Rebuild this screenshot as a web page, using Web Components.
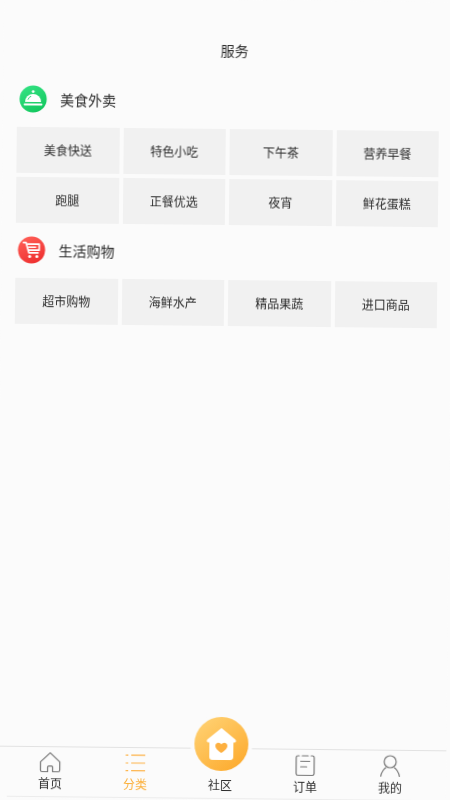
<!DOCTYPE html>
<html lang="zh">
<head>
<meta charset="utf-8">
<title>服务</title>
<style>
  html, body { margin: 0; padding: 0; height: 100%; background: #fbfbfb; overflow: hidden; }
  body { font-family: "Noto Sans CJK SC", "Noto Sans", sans-serif; color: #2b2b2b; }
  svg { display: block; }
</style>
</head>
<body>
<service-page>
  <service-section title="美食外卖">
    <svg slot="icon" width="28" height="28" viewBox="0 0 28 28">
      <defs><linearGradient id="g1" x1="0.2" y1="0" x2="0.7" y2="1"><stop offset="0" stop-color="#33e283"/><stop offset="1" stop-color="#12c75d"/></linearGradient></defs>
      <circle cx="14" cy="14" r="13.6" fill="url(#g1)"/>
      <circle cx="14" cy="6.6" r="1.4" fill="#fff"/>
      <path d="M6 17a8 8 0 0 1 16 0z" fill="#fff"/>
      <path d="M8.8 14.8a5.6 5.6 0 0 1 3.2-3.6" fill="none" stroke="#2ed87a" stroke-width="1"/>
      <rect x="4.6" y="18.6" width="18.8" height="1.8" rx=".9" fill="#fff"/>
    </svg>
    <service-tile>美食快送</service-tile>
    <service-tile>特色小吃</service-tile>
    <service-tile>下午茶</service-tile>
    <service-tile>营养早餐</service-tile>
    <service-tile>跑腿</service-tile>
    <service-tile>正餐优选</service-tile>
    <service-tile>夜宵</service-tile>
    <service-tile>鲜花蛋糕</service-tile>
  </service-section>
  <service-section title="生活购物">
    <svg slot="icon" width="28" height="28" viewBox="0 0 28 28">
      <defs><linearGradient id="g2" x1="0.2" y1="0" x2="0.7" y2="1"><stop offset="0" stop-color="#ff5f57"/><stop offset="1" stop-color="#ee2f2f"/></linearGradient></defs>
      <circle cx="14" cy="14" r="13.6" fill="url(#g2)"/>
      <path d="M5.8 6.6h2.6l2.9 10.2h9.2" fill="none" stroke="#fff" stroke-width="1.7" stroke-linecap="round" stroke-linejoin="round"/>
      <path d="M9.4 8.2h12.2v6H11" fill="none" stroke="#fff" stroke-width="1.7" stroke-linejoin="round"/>
      <path d="M10.6 11.2h8" stroke="#fff" stroke-width="1.5"/>
      <circle cx="12.2" cy="20.6" r="1.5" fill="#fff"/>
      <circle cx="19.4" cy="20.6" r="1.5" fill="#fff"/>
    </svg>
    <service-tile>超市购物</service-tile>
    <service-tile>海鲜水产</service-tile>
    <service-tile>精品果蔬</service-tile>
    <service-tile>进口商品</service-tile>
  </service-section>

  <tab-bar slot="nav">
    <tab-item label="首页">
      <svg width="24" height="24" viewBox="0 0 24 24" fill="none" stroke="#777" stroke-width="1.2" stroke-linejoin="round">
        <path d="M12 2.6 2.4 11.6v8.4c0 1 .5 1.5 1.5 1.5h5.6v-4.6q0-1 1-1h3q1 0 1 1v4.6h5.6c1 0 1.5-.5 1.5-1.5v-8.4z"/>
      </svg>
    </tab-item>
    <tab-item label="分类" active>
      <svg width="24" height="24" viewBox="0 0 24 24" fill="none" stroke="#fdb44b" stroke-width="1.2">
        <path d="M2.5 4.2h2.6M8 4.2h14M2.5 12h2.6M8 12h14M2.5 19.6h2.6M8 19.6h14"/>
      </svg>
    </tab-item>
    <tab-item label="社区"></tab-item>
    <tab-item label="订单" low>
      <svg width="24" height="24" viewBox="0 0 24 24" fill="none" stroke="#777" stroke-width="1.2" stroke-linejoin="round" stroke-linecap="round">
        <path d="M6 3H4.8Q3 3 3 4.8v16Q3 22.5 4.8 22.5h14.4q1.8 0 1.8-1.7v-16Q21 3 19.2 3H18M9 3h6"/>
        <path d="M7.5 8.5h9M7.5 14h6"/>
      </svg>
    </tab-item>
    <tab-item label="我的" low>
      <svg width="24" height="24" viewBox="0 0 24 24" fill="none" stroke="#777" stroke-width="1.2">
        <circle cx="12" cy="8" r="6"/>
        <path d="M2.6 23c.6-5 4-8.6 5.6-9.2M21.4 23c-.6-5-4-8.6-5.6-9.2"/>
      </svg>
    </tab-item>
    <svg slot="fab" width="54" height="54" viewBox="0 0 54 54">
      <defs><linearGradient id="g3" x1="0.1" y1="0" x2="0.9" y2="1"><stop offset="0" stop-color="#ffd274"/><stop offset="1" stop-color="#fda92b"/></linearGradient></defs>
      <circle cx="27" cy="27" r="27" fill="url(#g3)"/>
      <path d="M27 11 13 22.6c-1.2 1-.6 3 1 3h1v14.4c0 1.9 1.2 3 3 3h18c1.8 0 3-1.1 3-3V25.6h1c1.6 0 2.2-2 1-3z" fill="#fff"/>
      <path d="M27 36c-4.3-3-6-4.8-6-7.2 0-1.8 1.4-3.1 3-3.1 1.3 0 2.3.7 3 1.9.7-1.2 1.7-1.9 3-1.9 1.6 0 3 1.3 3 3.1 0 2.4-1.7 4.2-6 7.2z" fill="#fdb040"/>
    </svg>
  </tab-bar>
</service-page>

<script>
class ServicePage extends HTMLElement {
  constructor() {
    super();
    this.attachShadow({ mode: 'open' });
    this.shadowRoot.innerHTML = `
      <style>
        :host {
          display: flex;
          flex-direction: column;
          box-sizing: border-box;
          width: 450px;
          height: 800px;
          background: #fbfbfb;
          padding-top: 40px;
          /* the whole capture sits slightly tilted and soft */
          transform: rotate(0.6deg);
          filter: blur(0.25px);
        }
        h1 {
          margin: 0 0 27px;
          padding-left: 12px;
          height: 20px;
          line-height: 20px;
          text-align: center;
          font-size: 14px;
          font-weight: 400;
        }
        main { flex: 1; display: flex; flex-direction: column; gap: 13.5px; padding: 0 14px 0 14px; }
      </style>
      <h1>服务</h1>
      <main><slot></slot></main>
      <slot name="nav"></slot>
    `;
  }
}

class ServiceSection extends HTMLElement {
  constructor() {
    super();
    this.attachShadow({ mode: 'open' });
    this.shadowRoot.innerHTML = `
      <style>
        :host { display: block; }
        header {
          display: flex;
          align-items: center;
          height: 28px;
          padding-left: 2px;
          gap: 13px;
          margin-bottom: 14px;
          font-size: 14px;
        }
        .tiles {
          display: grid;
          grid-template-columns: repeat(4, 102.5px);
          grid-auto-rows: 45.5px;
          gap: 4.5px 4px;
        }
      </style>
      <header><slot name="icon"></slot><span></span></header>
      <div class="tiles"><slot></slot></div>
    `;
    this.shadowRoot.querySelector('span').textContent = this.getAttribute('title');
    this.removeAttribute('title');
  }
}

class ServiceTile extends HTMLElement {
  constructor() {
    super();
    this.attachShadow({ mode: 'open' });
    this.shadowRoot.innerHTML = `
      <style>
        :host {
          display: flex;
          align-items: center;
          justify-content: center;
          background: #f1f1f1;
          font-size: 12px;
        }
      </style>
      <slot></slot>
    `;
  }
}

class TabBar extends HTMLElement {
  constructor() {
    super();
    this.attachShadow({ mode: 'open' });
    this.shadowRoot.innerHTML = `
      <style>
        :host {
          display: grid;
          position: relative;
          box-sizing: border-box;
          grid-template-columns: repeat(5, 85px);
          height: 52.5px;
          padding-left: 11.5px;
          border-top: 1px solid #e2e2e2;
          /* faint rule along the bottom, starts inset on the left */
          background: linear-gradient(#ececec, #ececec) no-repeat 11px calc(100% - 1px) / 100% 1px;
        }
        .fab {
          position: absolute;
          left: 197.5px;
          top: -31.5px;
          width: 54px;
          height: 54px;
          border-radius: 50%;
          box-shadow: 0 0 0 4px #fbfbfb;
        }
      </style>
      <slot></slot>
      <div class="fab"><slot name="fab"></slot></div>
    `;
  }
}

class TabItem extends HTMLElement {
  constructor() {
    super();
    this.attachShadow({ mode: 'open' });
    this.shadowRoot.innerHTML = `
      <style>
        :host {
          display: flex;
          flex-direction: column;
          align-items: center;
          font-size: 12px;
        }
        :host([active]) { color: #fbb03b; }
        .icon { height: 24px; margin-top: 3.5px; }
        span { line-height: 16px; margin-top: 0.5px; }
        :host([low]) span { margin-top: 1.5px; }
      </style>
      <div class="icon"><slot></slot></div>
      <span></span>
    `;
    this.shadowRoot.querySelector('span').textContent = this.getAttribute('label');
  }
}

customElements.define('service-page', ServicePage);
customElements.define('service-section', ServiceSection);
customElements.define('service-tile', ServiceTile);
customElements.define('tab-bar', TabBar);
customElements.define('tab-item', TabItem);
</script>
</body>
</html>
